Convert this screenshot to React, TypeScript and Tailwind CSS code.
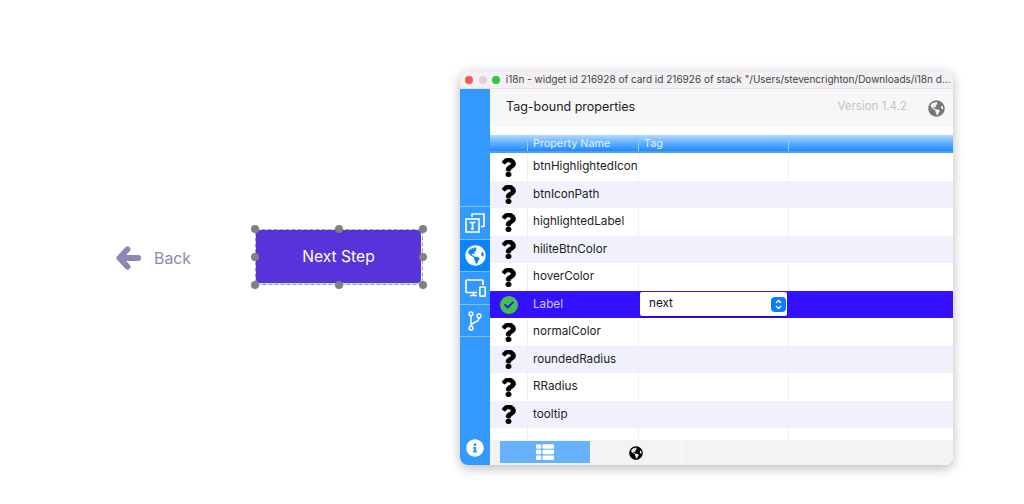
import React from "react";
import { FaQuestion, FaCheck, FaGlobeAmericas, FaInfoCircle, FaThList } from "react-icons/fa";

const names = ["btnHighlightedIcon", "btnIconPath", "highlightedLabel", "hiliteBtnColor", "hoverColor", "Label", "normalColor", "roundedRadius", "RRadius", "tooltip"];

function Handle({ className }: { className: string }) {
  return <span className={"absolute w-2 h-2 rounded-full bg-[#808080] " + className} />;
}

function BackArrow() {
  return (
    <svg width="26" height="26" viewBox="0 0 26 26" fill="none" stroke="#8a8ab0" strokeWidth="6" strokeLinecap="round" strokeLinejoin="round">
      <path d="M5 13h18M12 4l-8.5 9 8.5 9" />
    </svg>
  );
}

function CopyT() {
  return (
    <svg width="20" height="20" viewBox="0 0 20 20" fill="none" stroke="white" strokeWidth="1.6">
      <path d="M7 4V1h12v12.5h-3" strokeLinejoin="round" />
      <rect x="1" y="6" width="13" height="13" />
      <path d="M4.5 9.5h6M7.5 9.5v6.5M6 16h3" strokeWidth="1.7" />
    </svg>
  );
}

function Devices() {
  return (
    <svg width="21" height="18" viewBox="0 0 21 18" fill="none" stroke="white" strokeWidth="1.7">
      <path d="M12 13.5H2a1 1 0 0 1-1-1V2a1 1 0 0 1 1-1h15a1 1 0 0 1 1 1v4" />
      <path d="M5 16.5h7M8.5 13.5v3" />
      <rect x="14.8" y="8" width="5.4" height="9.2" rx="1" />
    </svg>
  );
}

function Branch() {
  return (
    <svg width="14" height="20" viewBox="0 0 14 20" fill="none" stroke="white" strokeWidth="1.5">
      <circle cx="3" cy="2.8" r="1.9" />
      <circle cx="3" cy="17.2" r="1.9" />
      <circle cx="11" cy="5" r="1.9" />
      <path d="M3 4.7v10.6M11 7c0 5-8 3.500-8 8.300" />
    </svg>
  );
}

function Cell({ active, children }: { active?: boolean; children: React.ReactNode }) {
  return (
    <div className={"h-[32.6px] flex items-center justify-center border-t border-[#7cbcff] " + (active ? "bg-[#0a84ff]" : "")}>
      {children}
    </div>
  );
}

export default function App() {
  return (
    <div className="w-[1024px] h-[504px] bg-white flex overflow-hidden font-['Inter',sans-serif]">
      <div className="w-[460px] shrink-0 pt-[229px] pl-[116px] flex items-start">
        <div className="h-[57px] w-[75px] flex items-center text-[#8a8ab0]">
          <BackArrow />
          <span className="ml-[13px] pt-[2px] text-[15.8px] font-normal">Back</span>
        </div>
        <div className="relative ml-[64px] w-[168px] h-[56px] pl-[1px] pt-[1px]">
          <div className="w-[165px] h-[53px] rounded-[4px] bg-[#5733d9] text-white text-[15.6px] shadow-[0_1px_2px_rgba(0,0,0,0.2)] flex items-center justify-center">
            Next Step
          </div>
          <svg className="absolute inset-0" width="168" height="56" fill="none">
            <rect x="0.5" y="0.5" width="167" height="55" stroke="#a0a0a0" strokeWidth="1" strokeDasharray="4 2" />
          </svg>
          <Handle className="-left-[4px] -top-[4px]" />
          <Handle className="left-[80px] -top-[4px]" />
          <Handle className="-right-[4px] -top-[4px]" />
          <Handle className="-left-[4px] top-[24px]" />
          <Handle className="-right-[4px] top-[24px]" />
          <Handle className="-left-[4px] -bottom-[4px]" />
          <Handle className="left-[80px] -bottom-[4px]" />
          <Handle className="-right-[4px] -bottom-[4px]" />
        </div>
      </div>

      <div className="mt-[71px] w-[493px] h-[394px] rounded-[8px] overflow-hidden flex flex-col bg-white shadow-[0_3px_12px_rgba(0,0,0,0.28)]">
        <div className="h-[18px] shrink-0 bg-[#f3eff4] flex items-center pl-[5px] gap-[5.6px] border-b border-[#e6e2e8]">
          <span className="w-2 h-2 shrink-0 rounded-full bg-[#f5574f]" />
          <span className="w-2 h-2 shrink-0 rounded-full bg-[#d9d5da]" />
          <span className="w-2 h-2 shrink-0 rounded-full bg-[#2cc33f]" />
          <span className="text-[10px] text-[#444] whitespace-nowrap">i18n - widget id 216928 of card id 216926 of stack "/Users/stevencrighton/Downloads/i18n d...</span>
        </div>
        <div className="flex-1 flex min-h-0">
          <div className="w-[30px] shrink-0 bg-[#3399ff] flex flex-col pt-[117px]">
            <Cell><CopyT /></Cell>
            <Cell active><FaGlobeAmericas size={21} color="white" /></Cell>
            <Cell><Devices /></Cell>
            <Cell><Branch /></Cell>
            <div className="flex-1 flex items-end justify-center pb-[8px] border-t border-[#7cbcff]">
              <FaInfoCircle size={18} color="white" />
            </div>
          </div>
          <div className="flex-1 flex flex-col min-w-0">
            <div className="h-[38px] shrink-0 bg-[#f7f7f7] flex items-start pl-[16px] pr-[9px]">
              <span className="mt-[9px] text-[12.5px] text-[#222]">Tag-bound properties</span>
              <span className="ml-auto mt-[9px] text-[11.5px] text-[#c4c4c4]">Version 1.4.2</span>
              <FaGlobeAmericas size={17} color="#777" className="ml-[21px] mt-[11px] mr-[-1px]" />
            </div>
            <div className="h-[8px] shrink-0" />
            <div className="h-[18px] shrink-0 flex text-[10.8px] text-[#e2f0ff] bg-gradient-to-b from-[#b4daff] via-[#5fafff] to-[#1a88ff] border-b-2 border-[#4a9df0]">
              <div className="w-[38px] border-r border-[#a5c6e6]" />
              <div className="w-[111px] pl-[5px] border-r border-[#a5c6e6] leading-[17px]">Property Name</div>
              <div className="w-[150px] pl-[5px] border-r border-[#a5c6e6] leading-[17px]">Tag</div>
            </div>
            <div className="flex flex-col">
              {names.map((n, i) => {
                const sel = n === "Label";
                const bg = sel ? "bg-[#3311ff]" : i % 2 ? "bg-[#f1f1fd]" : "bg-white";
                return (
                  <div key={n} className={"h-[27.5px] flex text-[11.7px] " + bg + (sel ? " text-[#cfc8ff]" : " text-[#222]")}>
                    <div className={"w-[38px] pt-[1px] flex items-center justify-center border-r " + (sel ? "border-[#3311ff]" : "border-[#f0f0f4]")}>
                      {sel ? (
                        <span className="w-[18px] h-[18px] rounded-full bg-[#43c24a] flex items-center justify-center">
                          <FaCheck size={10} color="#3311ff" />
                        </span>
                      ) : (
                        <FaQuestion size={19} color="black" stroke="black" strokeWidth={24} />
                      )}
                    </div>
                    <div className={"w-[111px] pt-[1px] pl-[5px] flex items-center whitespace-nowrap overflow-hidden border-r " + (sel ? "border-[#3311ff]" : "border-[#f0f0f4]")}>{n}</div>
                    <div className={"w-[150px] flex items-center border-r " + (sel ? "border-[#3311ff]" : "border-[#f0f0f4]")}>
                      {sel && (
                        <div className="w-[147px] ml-[1px] h-[24px] bg-white rounded-[2px] shadow-[0_1px_1px_rgba(0,0,0,0.3)] flex items-center pl-[9px] pr-[1px] text-[#111]">
                          <span>next</span>
                          <span className="ml-auto w-[15px] h-[15px] rounded-[4px] bg-[#0a7cff] flex items-center justify-center">
                            <svg width="7" height="11" viewBox="0 0 7 11" fill="none" stroke="white" strokeWidth="1.3">
                              <path d="M1 4l2.5-2.5L6 4M1 7l2.5 2.5L6 7" />
                            </svg>
                          </span>
                        </div>
                      )}
                    </div>
                  </div>
                );
              })}
            </div>
            <div className="flex-1 flex min-h-0">
              <div className="w-[38px] border-r border-[#f0f0f4]" />
              <div className="w-[111px] border-r border-[#f0f0f4]" />
              <div className="w-[150px] border-r border-[#f0f0f4]" />
            </div>
            <div className="h-[25px] shrink-0 bg-[#f3f3f3] flex pl-[10px] pt-[1px]">
              <div className="w-[90px] h-[22px] bg-[#66b2ff] flex items-center justify-center">
                <FaThList size={18} color="white" />
              </div>
              <div className="w-[92px] h-[24px] border-r border-[#fafafa] flex items-center justify-center">
                <FaGlobeAmericas size={14} color="black" />
              </div>
            </div>
          </div>
        </div>
      </div>
    </div>
  );
}
